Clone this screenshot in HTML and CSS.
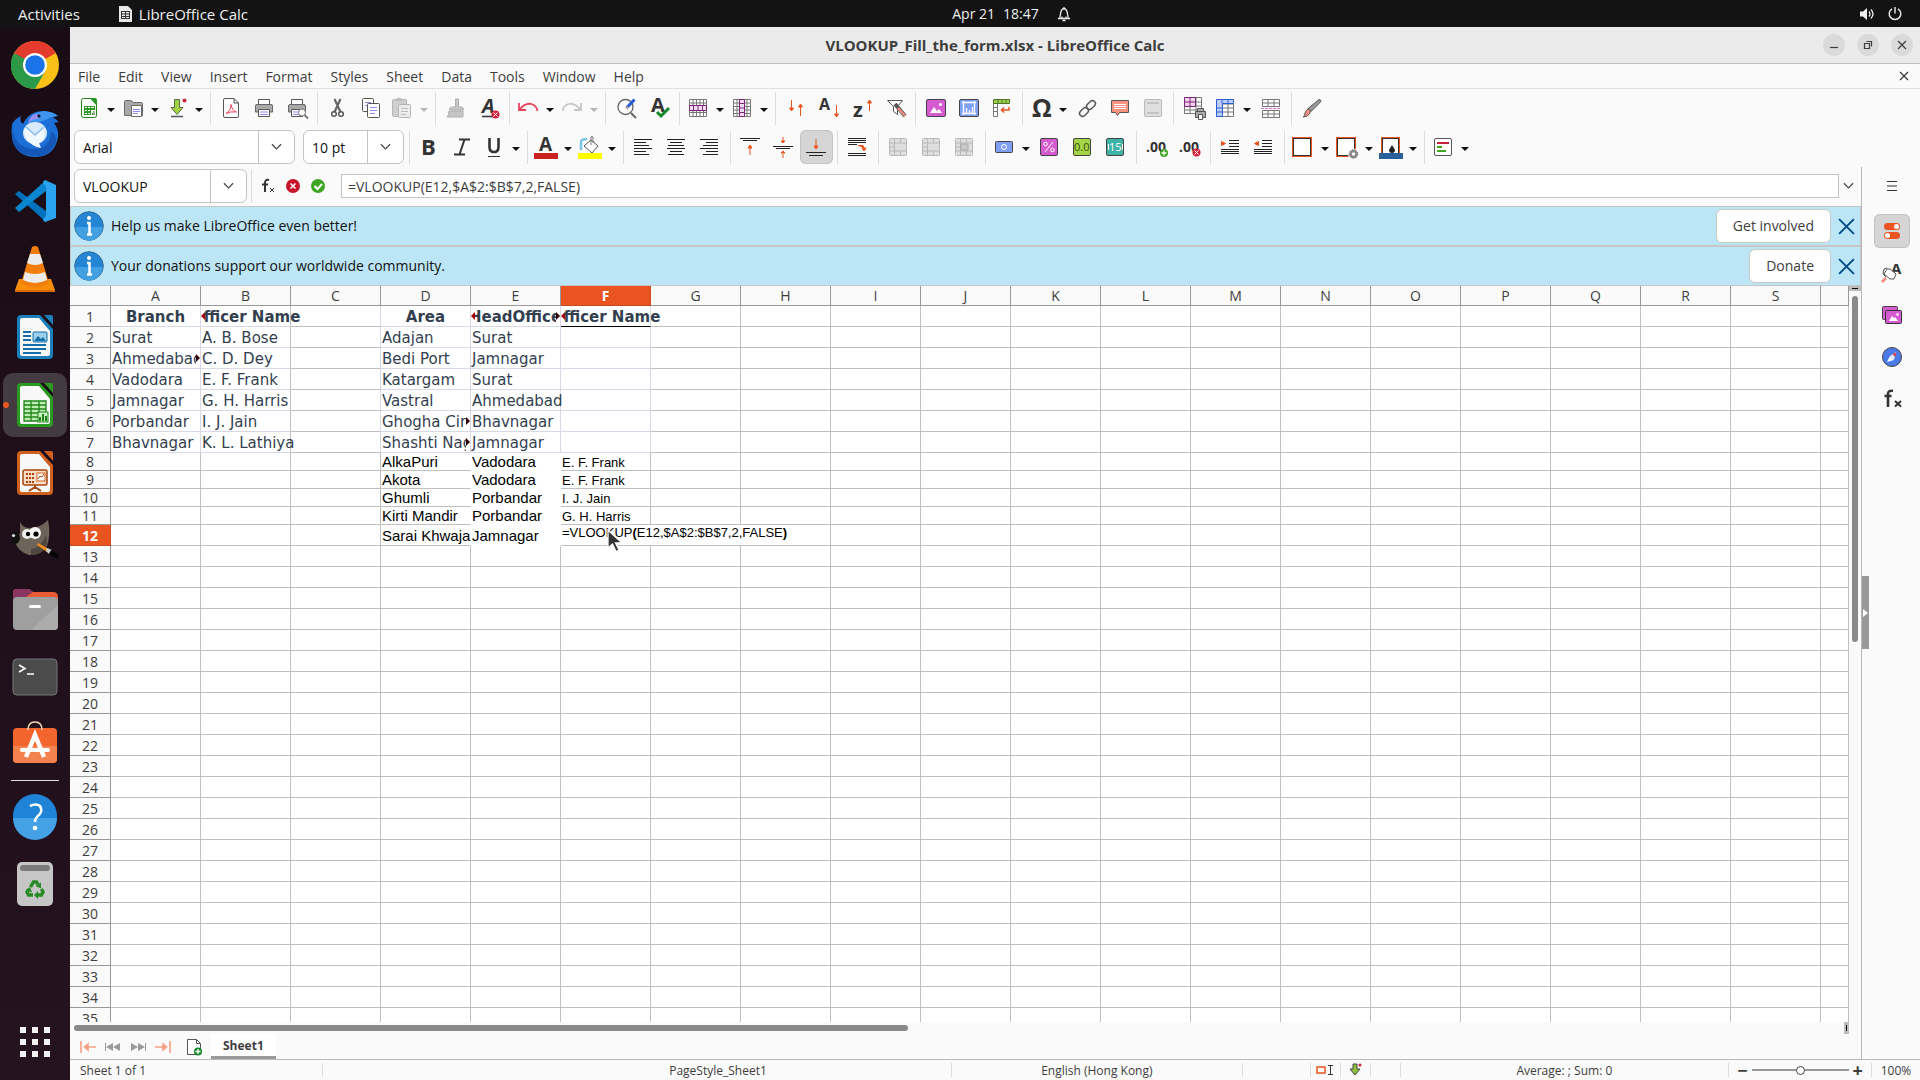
FILE: index.html
```html
<!DOCTYPE html>
<html lang="en">
<head>
    <meta charset="UTF-8">
    <title>VLOOKUP_Fill_the_form.xlsx - LibreOffice Calc</title>
    <link rel="stylesheet" href="styles.css">
</head>
<body>
<header class="topbar">
    <div class="top-left">
        <button>Activities</button>
        <button class="app-name">
            <svg width="14" height="16" viewBox="0 0 14 16"><path d="M1 0h9l4 4v12H1z" fill="#e8e8e8"/><path d="M3 5h9v8H3z" fill="#333"/><path d="M4 6h3v1.500H4zM8 6h3v1.500H8zM4 8.500h3V10H4zM8 8.500h3V10H8zM4 11h3v1H4zM8 11h3v1H8z" fill="#e8e8e8"/></svg>
            LibreOffice Calc
        </button>
    </div>
    <button class="clock">
        <span>Apr 21</span><span>18:47</span>
        <svg width="14" height="16" viewBox="0 0 14 16" fill="none" stroke="#eee" stroke-width="1.300"><path d="M1 12.500h12M2.500 12.500C4 10 2.500 3 7 2.500c4.500.500 3 7.500 4.500 10M5.500 14.500h3M7 1v1.500M5 12v-1.500M9 12v-1.500"/></svg>
    </button>
    <div class="top-right">
        <svg width="16" height="14" viewBox="0 0 16 14"><path d="M1 4.500h3L8 1v12L4 9.500H1z" fill="#eee"/><path d="M10 4.500q2 2.500 0 5M12 2.500q4 4.500 0 9" fill="none" stroke="#eee" stroke-width="1.300"/></svg>
        <svg width="14" height="14" viewBox="0 0 14 14" fill="none" stroke="#eee" stroke-width="1.400"><path d="M7 0v6.500M4 1.800a5.800 5.800 0 1 0 6 0"/></svg>
    </div>
</header>

<div class="desktop">
    <nav class="dock">
        <button aria-label="Google Chrome">
            <svg viewBox="0 0 48 48"><circle cx="24" cy="24" r="24" fill="#fbc116"/><path d="M24 24L3.200 12A24 24 0 0 1 44.800 12z" fill="#e33b2e"/><path d="M3.200 12A24 24 0 0 0 24 48L34.400 30 24 24 13.600 30z" fill="#2a9a49"/><path d="M3.200 12h41.600H24v12l-10.400 6z" fill="#e33b2e"/><path d="M3.200 12L13.600 30 24 24z" fill="#2a9a49"/><circle cx="24" cy="24" r="12" fill="#fff"/><circle cx="24" cy="24" r="9.800" fill="#1a73e8"/></svg>
        </button>
        <button aria-label="Thunderbird">
            <svg viewBox="0 0 48 48"><path d="M1 16q1-5 9-9-2 5 2 8Q18 2 33 2q10 1 14 5l-5 1 6 5-5 1q5 6 4 14-3 19-22 20Q4 48 1 28q-1-7 0-12z" fill="#1b6fd6"/><path d="M17 14Q20 3 33 2q10 1 14 5l-7 1q-8 5-14 5z" fill="#3f95ee"/><path d="M17 14q4-4 10-4 3-5-3-5-5 2-7 9z" fill="#9a8df0"/><circle cx="28" cy="7" r="1.600" fill="#113"/><path d="M2 16q-1 14 8 20 12 7 22 2 8-5 8-16 6 3 5 11-6 14-20 14Q5 47 1 30z" fill="#1457b8"/><ellipse cx="24" cy="24" rx="12" ry="11" fill="#d8eafb"/><path d="M15 18l9 8 9-8q2 12-5 16l2 5q-9-1-15-10-3-6 0-11z" fill="#f1f8ff"/><path d="M15 18l9 8 9-8" fill="none" stroke="#8abcf0" stroke-width="1.500"/></svg>
        </button>
        <button aria-label="Visual Studio Code">
            <svg viewBox="0 0 48 48"><path d="M4 17l4-3 27 20v11z" fill="#0071bd"/><path d="M4 31l4 4 27-21V3z" fill="#0a86d1"/><path d="M34 3l11 5v33l-11 4q-2-1-2-3l3-3V10l-3-4q0-2 2-3z" fill="#2ba3ee"/></svg>
        </button>
        <button aria-label="VLC">
            <svg viewBox="0 0 48 48"><path d="M8 34h32l4 11v2H4v-2z" fill="#f78d0a"/><path d="M4 45h40v2H4z" fill="#d96900"/><path d="M21 2q3-2 6 0l11 36q-14 8-28 0z" fill="#f27d0a"/><path d="M19 9h10l3 9q-8 4-16 0zM14 27q10 4 20 0l2 8q-12 6-24 0z" fill="#ececec"/></svg>
        </button>
        <button aria-label="LibreOffice Writer">
            <svg viewBox="0 0 48 48"><use href="#doc" color="#1b7fb9"/><path d="M12 19h8M12 23h8M12 27h8M12 32h23M12 36h23M12 40h18" stroke="#136fa8" stroke-width="2"/><rect x="22" y="19" width="14" height="10" rx="1" fill="#9dd0ea" stroke="#136fa8"/><path d="M23 28l4-5 3 3 2-2 3 4z" fill="#136fa8"/></svg>
        </button>
        <button class="running" aria-label="LibreOffice Calc">
            <svg viewBox="0 0 48 48"><use href="#doc" color="#2b9a22"/><path d="M13 20h22v20H13zM13 24h22M13 28h22M13 32h22M13 36h22M20 20v20M28 20v20" fill="#bdeeb2" stroke="#1f8418" stroke-width="1.300"/><rect x="27" y="31" width="10" height="10" fill="#c9f3c0" stroke="#1f8418"/><path d="M29 40v-4M32 40v-7M35 40v-5" stroke="#1f8418" stroke-width="2"/></svg>
        </button>
        <button aria-label="LibreOffice Impress">
            <svg viewBox="0 0 48 48"><use href="#doc" color="#d0601e"/><rect x="12" y="21" width="24" height="15" rx="2" fill="#fbdcc4" stroke="#a8450c" stroke-width="1.500"/><path d="M15 25h9M15 29h9M15 33h9" stroke="#a8450c" stroke-width="2" stroke-dasharray="2 1"/><rect x="26" y="24" width="8" height="8" fill="#fff" stroke="#d0601e"/><path d="M27 30l2-3 2 1 2-3" fill="none" stroke="#a8450c"/><path d="M24 36v2M24 38l-6 4M24 38l6 4" stroke="#a8450c" stroke-width="2"/></svg>
        </button>
        <button aria-label="GIMP">
            <svg viewBox="0 0 48 48"><path d="M9 5q3 6 10 6 10 0 18-8 3 14-1 26-6 10-18 9Q6 34 4 24q4-4 5-8z" fill="#6d6559"/><path d="M20 32q10-1 15-14 2 8-1 14-6 6-14 6z" fill="#4d473f"/><circle cx="16" cy="17" r="5" fill="#eee"/><circle cx="24" cy="16" r="6" fill="#f4f4f4"/><circle cx="17" cy="17" r="2.200"/><circle cx="25" cy="17" r="2.600"/><ellipse cx="4" cy="21" rx="5" ry="6" fill="#111"/><circle cx="2.500" cy="18.500" r="1.600" fill="#ddd"/><path d="M27 26l11 6-2 3-10-7z" fill="#ef8b1e"/><path d="M36 31l5 2-3 4-3-3z" fill="#ccc"/><path d="M40 33q8 3 8 9-6-2-10-5z" fill="#050505"/></svg>
        </button>
        <button aria-label="Files">
            <svg viewBox="0 0 48 48"><path d="M2 8q0-4 4-4h12l4 3h20q5 0 5 5v8H2z" fill="#e95b34"/><path d="M2 8q0-4 4-4h12l4 3-10 7-10 6z" fill="#8a3560"/><rect x="2" y="12" width="45" height="33" rx="4" fill="#9f9f9f"/><path d="M47 20v21q0 4-4 4H20z" fill="#acacac"/><rect x="18" y="20" width="12" height="3" rx="1.500" fill="#fff"/></svg>
        </button>
        <button aria-label="Terminal">
            <svg viewBox="0 0 48 48"><rect x="2" y="6" width="44" height="36" rx="4" fill="#4b4b4b" stroke="#777"/><path d="M8 12l6 3.500-6 3.500M16 21h7" fill="none" stroke="#fff" stroke-width="1.600"/></svg>
        </button>
        <button aria-label="Ubuntu Software">
            <svg viewBox="0 0 48 48"><rect x="2" y="7" width="44" height="35" rx="4" fill="#f2662d"/><path d="M2 25h44v13q0 4-4 4H6q-4 0-4-4z" fill="#f4824f"/><path d="M17 9q0-8 7-8t7 8" fill="none" stroke="#f3d6b4" stroke-width="1.500"/><path d="M15 36l9-22 9 22" fill="none" stroke="#fff" stroke-width="4.500"/><path d="M11 29h26" stroke="#fff" stroke-width="4" stroke-linecap="round"/></svg>
        </button>
        <hr>
        <button aria-label="Help">
            <svg viewBox="0 0 48 48"><circle cx="24" cy="24" r="22" fill="#1f83d8"/><path d="M2 26a22 22 0 0 0 44 0z" fill="#44a1e6"/><path d="M19 14q6-3 10 0 3 5-1 9-4 3-4 7" fill="none" stroke="#fff" stroke-width="2.600"/><circle cx="24" cy="36" r="2.300" fill="#fff"/></svg>
        </button>
        <button aria-label="Trash">
            <svg viewBox="0 0 48 48"><rect x="6" y="2" width="36" height="44" rx="5" fill="#c6c6c6"/><rect x="9" y="5" width="30" height="6" rx="3" fill="#7b7b7b"/><g fill="none" stroke="#268a24" stroke-width="3.400"><path d="M19.500 27l3-5h3l1.500 2.500"/><path d="M30.500 29l1.500 3-1.500 3H26"/><path d="M22 35h-4.500l-1.500-3 1.500-2.500"/></g><path d="M30 22.500v6l-5.500-2.500zM27 31v8l-4-4zM14.500 30l4.500-3 2 5.500z" fill="#268a24"/></svg>
        </button>
        <button class="apps" aria-label="Show Applications">
            <svg viewBox="0 0 48 48" fill="#f2f2f2"><path d="M9 9h6v6H9zM21 9h6v6h-6zM33 9h6v6h-6zM9 21h6v6H9zM21 21h6v6h-6zM33 21h6v6h-6zM9 33h6v6H9zM21 33h6v6h-6zM33 33h6v6h-6z"/></svg>
        </button>
    </nav>

    <main class="window">
        <div class="titlebar">
            <h1>VLOOKUP_Fill_the_form.xlsx - LibreOffice Calc</h1>
            <div class="win-buttons">
                <button aria-label="Minimize"><svg viewBox="0 0 22 22"><path d="M7 13.500h8"/></svg></button>
                <button aria-label="Restore"><svg viewBox="0 0 22 22"><path d="M7.500 9.500h5v5h-5zM9.500 7.500h5v5"/></svg></button>
                <button aria-label="Close"><svg viewBox="0 0 22 22"><path d="M7 7l8 8M15 7l-8 8"/></svg></button>
            </div>
        </div>
        <div class="menubar">
            <button>File</button><button>Edit</button><button>View</button><button>Insert</button><button>Format</button><button>Styles</button><button>Sheet</button><button>Data</button><button>Tools</button><button>Window</button><button>Help</button>
            <button class="close-doc" aria-label="Close document"><svg width="10" height="10" viewBox="0 0 10 10"><path d="M1 1l8 8M9 1L1 9" stroke="#3d3d3d" stroke-width="1.300"/></svg></button>
        </div>

        <!-- standard toolbar -->
        <div class="toolbar">
            <button class="tool" aria-label="New"><svg viewBox="0 0 24 24"><path d="M4.500 4.500q0-2 2-2h7l6 6v11q0 2-2 2h-11q-2 0-2-2z" fill="#fff" stroke="#1f8418"/><path d="M13 2h5q2 0 2 2v6z" fill="#2b9a22"/><path d="M7 10h11v9H7z" fill="#2b9a22"/><path d="M8 11h2v1H8zM11 11h2v1h-2zM14 11h3v1h-3zM8 14h2v1H8zM11 14h2v1h-2zM8 17h2v1H8zM11 17h2v1h-2zM14 14h4v5h-4z" fill="#fff"/><path d="M15.500 19v-2M17 19v-4" stroke="#1f8418"/></svg></button><button class="caret" aria-label="New options"></button>
            <button class="tool" aria-label="Open"><svg viewBox="0 0 24 24"><path d="M3.500 19.500v-14q0-1 1-1h6l2 2h8q1 0 1 1v12z" fill="#a9a9a9" stroke="#6a6a6a"/><path d="M10.500 9.500h10v11h-10z" fill="#fff" stroke="#6a6a6a"/><path d="M12 13.500h7M12 15.500h7M12 17.500h5" stroke="#8d8df0"/></svg></button><button class="caret" aria-label="Open options"></button>
            <button class="tool" aria-label="Save"><svg viewBox="0 0 24 24"><path d="M9.500 3.500h5v8h3.500l-6 7-6-7h3.500z" fill="#a2d243" stroke="#5b6b45"/><path d="M6 20.500h12" stroke="#555" stroke-width="1.500"/><circle cx="19.500" cy="4.500" r="2" fill="#c9203b"/></svg></button><button class="caret" aria-label="Save options"></button>
            <i class="sep"></i>
            <button class="tool" aria-label="Export as PDF"><svg viewBox="0 0 24 24"><path d="M4.500 4q0-1.500 1.500-1.500h9l4.500 4.500v13q0 1.500-1.500 1.500H6q-1.500 0-1.500-1.500zM15 2.500V7h4.500" fill="#fff" stroke="#555"/><path d="M7 17.500q5-3 5-9 1 6 5.500 7.500-6-1-10.500 1.500z" fill="none" stroke="#ee3f59"/></svg></button>
            <button class="tool" aria-label="Print"><svg viewBox="0 0 24 24"><use href="#printer"/></svg></button>
            <button class="tool" aria-label="Print Preview"><svg viewBox="0 0 24 24"><use href="#printer"/><circle cx="17" cy="16.500" r="3.500" fill="#fff" stroke="#777"/><path d="M19.500 19l3.500 3.500" stroke="#777" stroke-width="1.800"/></svg></button>
            <i class="sep"></i>
            <button class="tool" aria-label="Cut"><svg viewBox="0 0 24 24"><path d="M8.500 3l6 13M14.500 3l-6 13" stroke="#666" stroke-width="2.200"/><circle cx="8" cy="18" r="2.300" fill="#fff" stroke="#555" stroke-width="1.500"/><circle cx="15" cy="18" r="2.300" fill="#fff" stroke="#555" stroke-width="1.500"/></svg></button>
            <button class="tool" aria-label="Copy"><svg viewBox="0 0 24 24"><rect x="3.500" y="2.500" width="11" height="13" rx="1" fill="#fff" stroke="#555"/><path d="M6 6.500h6M6 9.500h2" stroke="#8d8df0"/><rect x="8.500" y="7.500" width="12" height="14" rx="1" fill="#fff" stroke="#555"/><path d="M11 11.500h7M11 14.500h7M11 17.500h5" stroke="#8d8df0"/></svg></button>
            <button class="tool" aria-label="Paste" disabled><svg viewBox="0 0 24 24"><rect x="2.500" y="3.500" width="14" height="17" rx="1.500" fill="#cfcfcf" stroke="#b5b5b5"/><path d="M6 3q3-3 6 0v2H6z" fill="#bbb"/><rect x="8.500" y="8.500" width="12" height="13" rx="1" fill="#ececec" stroke="#b5b5b5"/><path d="M11 12.500h7M11 15.500h7M11 18.500h5" stroke="#bbb"/></svg></button><button class="caret dim" aria-label="Paste options"></button>
            <i class="sep"></i>
            <button class="tool" aria-label="Clone Formatting"><svg viewBox="0 0 24 24"><path d="M11.500 3h3v8h3q2 0 2 3h-14q0-3 3-3h3zM5 15h14v6H3q2-2 2-6z" fill="#c5c5c5" stroke="#b0b0b0"/></svg></button>
            <button class="tool" aria-label="Clear Direct Formatting"><svg viewBox="0 0 24 24"><text x="5" y="17" class="glyph" font-size="20" font-style="italic">A</text><path d="M5 20.500h11" stroke="#333" stroke-width="1.500"/><use href="#badge-x" x="14" y="14"/></svg></button>
            <i class="sep"></i>
            <button class="tool" aria-label="Undo"><svg viewBox="0 0 24 24" fill="none" stroke="#e8425c" stroke-width="1.800"><path d="M3 7v7h7M3.500 13.500q6-7 12-5.500 5 1.500 6 7"/></svg></button><button class="caret" aria-label="Undo list"></button>
            <button class="tool" aria-label="Redo" disabled><svg viewBox="0 0 24 24" fill="none" stroke="#c6c6c6" stroke-width="1.800"><path d="M21 7v7h-7M20.500 13.500q-6-7-12-5.500-5 1.500-6 7"/></svg></button><button class="caret dim" aria-label="Redo list"></button>
            <i class="sep"></i>
            <button class="tool" aria-label="Find and Replace"><svg viewBox="0 0 24 24"><circle cx="11.500" cy="11" r="7.500" fill="#fff" stroke="#666" stroke-width="1.300"/><path d="M17 17l5 5" stroke="#666" stroke-width="2"/><path d="M20.500 3.500l-8 8.500" stroke="#2a5bd7" stroke-width="3"/><path d="M13.500 10l1.500 1.500-3 1z" fill="#f6a35b"/></svg></button>
            <button class="tool" aria-label="Spelling"><svg viewBox="0 0 24 24"><text x="4" y="16" class="glyph" font-size="20">A</text><path d="M10 16l4 4 8-8" fill="none" stroke="#14892c" stroke-width="3"/></svg></button>
            <i class="sep"></i>
            <button class="tool" aria-label="Row"><svg viewBox="0 0 24 24"><path d="M3.500 3.500h17v17h-17zM3.500 7h17M3.500 16.500h17M7 3.500v17M10.500 3.500v17M14 3.500v17M17.500 3.500v17" fill="#fff" stroke="#777"/><path d="M3.500 9.500h17v5h-17zM7.500 9.500v5M12 9.500v5M16.500 9.500v5" fill="#f6dcf2" stroke="#7c2475"/></svg></button><button class="caret" aria-label="Row options"></button>
            <button class="tool" aria-label="Column"><svg viewBox="0 0 24 24"><path d="M3.500 3.500h17v17h-17zM7 3.500v17M17 3.500v17M3.500 7h17M3.500 10.500h17M3.500 14h17M3.500 17.500h17" fill="#fff" stroke="#777"/><path d="M9.500 3.500h5v17h-5zM9.500 7.500h5M9.500 12h5M9.500 16.500h5" fill="#f6dcf2" stroke="#7c2475"/></svg></button><button class="caret" aria-label="Column options"></button>
            <i class="sep"></i>
            <button class="tool" aria-label="Sort"><svg viewBox="0 0 24 24" fill="#e95420" stroke="#e95420"><path d="M7.500 4v10M5.500 12h4l-2 3zM16.500 9v11M14.500 11h4l-2-3z"/></svg></button>
            <button class="tool" aria-label="Sort Ascending"><svg viewBox="0 0 24 24"><text x="2" y="14" class="glyph" font-size="16">A</text><path d="M19.500 9v11M17.500 18h4l-2 3z" fill="#e95420" stroke="#e95420"/></svg></button>
            <button class="tool" aria-label="Sort Descending"><svg viewBox="0 0 24 24"><text x="3" y="21" class="glyph" font-size="20">z</text><path d="M19.500 4v11M17.500 7h4l-2-3z" fill="#e95420" stroke="#e95420"/></svg></button>
            <button class="tool" aria-label="AutoFilter"><svg viewBox="0 0 24 24"><path d="M4.500 4.500h15l-5 6v8l-4-3v-5z" fill="#fff" stroke="#555"/><path d="M12 8l10 12" stroke="#555" stroke-width="4"/><path d="M15 12l7 8" stroke="#ef8d80" stroke-width="2.600"/></svg></button>
            <i class="sep"></i>
            <button class="tool" aria-label="Image"><svg viewBox="0 0 24 24"><rect x="2.500" y="3.500" width="19" height="17" rx="1.500" fill="#d65ad0" stroke="#444"/><path d="M6 17l4-6 3 4 2-2 3 4z" fill="#fff"/><circle cx="16.500" cy="8.500" r="1.500" fill="#fff"/></svg></button>
            <button class="tool" aria-label="Chart"><svg viewBox="0 0 24 24"><rect x="2.500" y="3.500" width="19" height="17" rx="1.500" fill="#7fa0f5" stroke="#444"/><path d="M6.500 5v14M5 17.500h14M5 6.500h14M17.500 5v14M9.500 17v-5M12.500 17v-3M15.500 17v-6" stroke="#fff" stroke-width="1.300"/></svg></button>
            <button class="tool" aria-label="Pivot Table"><svg viewBox="0 0 24 24"><path d="M3.500 7.500h4v13h-4zM3.500 11.500h4M3.500 15.500h4" fill="#fff" stroke="#777"/><path d="M3.500 3.500h16v4h-16zM8 3.500v4M12 3.500v4M16 3.500v4" fill="#9ad24a" stroke="#55702a"/><path d="M19 11v3h-7M14 11.500L11.500 14l2.500 2.500" fill="none" stroke="#e95420" stroke-width="1.500"/></svg></button>
            <i class="sep"></i>
            <button class="tool" aria-label="Special Character"><svg viewBox="0 0 24 24"><text x="3" y="21" class="glyph" font-size="25">Ω</text></svg></button><button class="caret" aria-label="Recent characters"></button>
            <button class="tool" aria-label="Hyperlink"><svg viewBox="0 0 24 24" fill="none" stroke="#555" stroke-width="1.400"><rect x="-5" y="-3" width="10" height="6" rx="3" transform="translate(9 16) rotate(-45)"/><rect x="-5" y="-3" width="10" height="6" rx="3" transform="translate(16 9) rotate(-45)"/></svg></button>
            <button class="tool" aria-label="Comment"><svg viewBox="0 0 24 24"><path d="M3.500 4.500h17v12h-9l-2 3-2-3h-4z" fill="#f8917f" stroke="#555"/><path d="M6 8.500h12M6 10.500h12M6 12.500h12" stroke="#fff"/></svg></button>
            <button class="tool" aria-label="Headers and Footers"><svg viewBox="0 0 24 24"><rect x="3.500" y="3.500" width="17" height="17" rx="1.500" fill="#dedede" stroke="#bbb"/><path d="M6 7h12M6 17h12" stroke="#bbb" stroke-width="1.500"/></svg></button>
            <i class="sep"></i>
            <button class="tool" aria-label="Print Area"><svg viewBox="0 0 24 24"><path d="M2.500 1.500h17v16h-17zM2.500 14h17M8 1.500v16M14 1.500v16M2.500 10h17M2.500 6h17" fill="#fff" stroke="#777"/><path d="M2.500 1.500h11v9h-11zM2.500 6h11M8 1.500v9" fill="#f2d3ee" stroke="#7c2475"/><path d="M13.500 15.500h10v6h-10zM15.500 12.500h6v3h-6z" fill="#aaa" stroke="#555"/><path d="M16.500 18.500h4v5h-4z" fill="#fff" stroke="#555"/></svg></button>
            <button class="tool" aria-label="Freeze Rows and Columns"><svg viewBox="0 0 24 24"><path d="M3.500 3.500h17v17h-17zM3.500 12h17M3.500 16h17M9 3.500v17M15 3.500v17M3.500 8h17" fill="#fff" stroke="#777"/><path d="M3.500 3.500h17v4h-11v13h-6zM9 3.500v4M15 3.500v4M3.500 12h6M3.500 16h6" fill="#bccdf9" stroke="#2e5fd6"/></svg></button><button class="caret" aria-label="Freeze options"></button>
            <button class="tool" aria-label="Split Window"><svg viewBox="0 0 24 24"><path d="M3.500 3.500h17v7h-17zM3.500 14.500h17v7h-17zM9 3.500v7M15 3.500v7M9 14.500v7M15 14.500v7M3.500 7h17M3.500 18h17" fill="#fff" stroke="#777"/><path d="M2 12.500h20" stroke="#e574dc" stroke-dasharray="3 1"/></svg></button>
            <i class="sep"></i>
            <button class="tool" aria-label="Draw Functions"><svg viewBox="0 0 24 24"><path d="M19 3.500q3 0 1 3l-9 9-3-3z" fill="#999" stroke="#555"/><path d="M8 13q4 1 2 4-2 4-7 4 2-1 2-4 1-3 3-4z" fill="#f8917f" stroke="#555"/></svg></button>
        </div>

        <!-- formatting toolbar -->
        <div class="toolbar">
            <div class="combo font-name"><input type="text" value="Arial" aria-label="Font Name"><button aria-label="Font list"><svg viewBox="0 0 12 8"><path d="M1 1l5 5 5-5"/></svg></button></div>
            <div class="combo font-size"><input type="text" value="10 pt" aria-label="Font Size"><button aria-label="Size list"><svg viewBox="0 0 12 8"><path d="M1 1l5 5 5-5"/></svg></button></div>
            <i class="sep"></i>
            <button class="tool" aria-label="Bold"><svg viewBox="0 0 24 24"><text x="3" y="20" class="glyph" font-size="22">B</text></svg></button>
            <button class="tool" aria-label="Italic"><svg viewBox="0 0 24 24"><path d="M8 4.500h11M3 19.500h11M13.500 4.500l-5 15" stroke="#333" stroke-width="2" fill="none"/></svg></button>
            <button class="tool" aria-label="Underline"><svg viewBox="0 0 24 24"><path d="M7.500 3v9q0 5 4.500 5t4.500-5V3" stroke="#333" stroke-width="2.600" fill="none"/><path d="M6 21.500h12" stroke="#333"/></svg></button><button class="caret" aria-label="Underline options"></button>
            <i class="sep"></i>
            <button class="tool" aria-label="Font Color"><svg viewBox="0 0 24 24"><text x="5" y="16" class="glyph" font-size="19">A</text><path d="M0 18h24v6H0z" fill="#c9211e"/></svg></button><button class="caret" aria-label="Font colors"></button>
            <button class="tool" aria-label="Background Color"><svg viewBox="0 0 24 24"><path d="M3 15V7q0-3 6-3" fill="none" stroke="#7cc5e6" stroke-width="2.500"/><path d="M6 11l7-6 7 6-6 7z" fill="#fff" stroke="#555"/><path d="M13 10V3q0-3 2-1v6" fill="none" stroke="#777"/><path d="M0 18h24v6H0z" fill="#ff0"/></svg></button><button class="caret" aria-label="Background colors"></button>
            <i class="sep"></i>
            <button class="tool" aria-label="Align Left"><svg viewBox="0 0 24 24" class="lines"><path d="M2 4.500h18M2 7.500h12M2 10.500h15M2 13.500h18M2 16.500h12M2 19.500h15"/></svg></button>
            <button class="tool" aria-label="Center Horizontally"><svg viewBox="0 0 24 24" class="lines"><path d="M2 4.500h18M5 7.500h12M3 10.500h16M2 13.500h18M5 16.500h12M3 19.500h16"/></svg></button>
            <button class="tool" aria-label="Align Right"><svg viewBox="0 0 24 24" class="lines"><path d="M2 4.500h18M8 7.500h12M5 10.500h15M2 13.500h18M8 16.500h12M5 19.500h15"/></svg></button>
            <i class="sep"></i>
            <button class="tool" aria-label="Align Top"><svg viewBox="0 0 24 24" class="lines"><path d="M1 3.500h20M4 5.500h14"/><path class="orange" d="M11 20V11M9 13h4l-2-3z"/></svg></button>
            <button class="tool" aria-label="Center Vertically"><svg viewBox="0 0 24 24" class="lines"><path d="M1 11.500h20M4 13.500h14"/><path class="orange" d="M11 2v4M9 6h4l-2 2zM11 23v-4M9 18h4l-2-2z"/></svg></button>
            <button class="tool pressed" aria-label="Align Bottom"><svg viewBox="0 0 24 24" class="lines"><path d="M1 17.500h20M4 20.500h14"/><path class="orange" d="M11 4v8M9 11h4l-2 3z"/></svg></button>
            <i class="sep"></i>
            <button class="tool" aria-label="Wrap Text"><svg viewBox="0 0 24 24" class="lines"><path d="M2 3.500h18M2 5.500h18M2 7.500h18M2 9.500h9M2 18.500h18M2 20.500h18"/><path class="orange" d="M12 10.500h5l1 3M16 13h4l-2 3z"/></svg></button>
            <i class="sep"></i>
            <button class="tool" aria-label="Merge and Center" disabled><svg viewBox="0 0 24 24"><use href="#merge"/></svg></button>
            <button class="tool" aria-label="Merge Cells" disabled><svg viewBox="0 0 24 24"><use href="#merge"/></svg></button>
            <button class="tool" aria-label="Unmerge Cells" disabled><svg viewBox="0 0 24 24"><use href="#merge"/><path d="M8 9h7v6H8z" fill="#c9c9c9" stroke="#aaa"/></svg></button>
            <i class="sep"></i>
            <button class="tool" aria-label="Format as Currency"><svg viewBox="0 0 24 24"><rect x="3.500" y="6.500" width="17" height="11" rx="1" fill="#7fa0f5" stroke="#444"/><circle cx="12" cy="12" r="2.500" fill="none" stroke="#fff"/></svg></button><button class="caret" aria-label="Currency options"></button>
            <button class="tool" aria-label="Format as Percent"><svg viewBox="0 0 24 24"><rect x="2.500" y="3.500" width="17" height="17" rx="1.500" fill="#d65ad0" stroke="#444"/><path d="M7 17l8-10" stroke="#fff"/><circle cx="7.500" cy="9" r="1.800" fill="none" stroke="#fff"/><circle cx="14.500" cy="15" r="1.800" fill="none" stroke="#fff"/></svg></button>
            <button class="tool" aria-label="Format as Number"><svg viewBox="0 0 24 24"><rect x="2.500" y="3.500" width="17" height="17" rx="1.500" fill="#a4d545" stroke="#444"/><text x="3" y="16" font-size="11" fill="#384a14">0.0</text></svg></button>
            <button class="tool" aria-label="Format as Date"><svg viewBox="0 0 24 24"><rect x="2.500" y="3.500" width="17" height="17" rx="1.500" fill="#3fb3a8" stroke="#444"/><text x="5" y="16" font-size="11" fill="#fff">15</text><path d="M4.500 9v6M18.500 9v6" stroke="#fff"/></svg></button>
            <i class="sep"></i>
            <button class="tool" aria-label="Add Decimal Place"><svg viewBox="0 0 24 24"><text x="1" y="17" class="glyph" font-size="14">.00</text><circle cx="19" cy="18" r="4" fill="#3fa624"/><path d="M16.500 18h5M19 15.500v5" stroke="#fff" stroke-width="1.300"/></svg></button>
            <button class="tool" aria-label="Delete Decimal Place"><svg viewBox="0 0 24 24"><text x="1" y="17" class="glyph" font-size="14">.00</text><use href="#badge-x" x="14" y="13"/></svg></button>
            <i class="sep"></i>
            <button class="tool" aria-label="Increase Indent"><svg viewBox="0 0 24 24" class="lines"><path d="M10 5.500h10M10 8.500h10M10 11.500h10M2 14.500h18M2 16.500h18M2 18.500h18"/><path class="orange" d="M2.500 6.500l4 2-4 2z"/></svg></button>
            <button class="tool" aria-label="Decrease Indent"><svg viewBox="0 0 24 24" class="lines"><path d="M10 5.500h10M10 8.500h10M10 11.500h10M2 14.500h18M2 16.500h18M2 18.500h18"/><path class="orange" d="M6.500 6.500l-4 2 4 2z"/></svg></button>
            <i class="sep"></i>
            <button class="tool" aria-label="Borders"><svg viewBox="0 0 24 24"><rect x="1.500" y="2.500" width="19" height="19" fill="#fff" stroke="#e95420"/><rect x="2.500" y="3.500" width="17" height="17" fill="#fff" stroke="#333"/></svg></button><button class="caret" aria-label="Border options"></button>
            <button class="tool" aria-label="Border Style"><svg viewBox="0 0 24 24"><rect x="1.500" y="2.500" width="19" height="19" fill="#fff" stroke="#e95420"/><rect x="2.500" y="3.500" width="17" height="17" fill="#fff" stroke="#333"/><circle cx="18.500" cy="19" r="5.500" fill="#fafafa"/><circle cx="18.500" cy="19" r="3" fill="none" stroke="#888" stroke-width="2.500"/><circle cx="18.500" cy="19" r="4.300" fill="none" stroke="#777" stroke-dasharray="1.500 1.500"/></svg></button><button class="caret" aria-label="Border styles"></button>
            <button class="tool" aria-label="Border Color"><svg viewBox="0 0 24 24"><rect x="2.500" y="2.500" width="18" height="18" fill="#fff" stroke="#e95420"/><rect x="3.500" y="3.500" width="16" height="16" fill="#fff" stroke="#333"/><path d="M13 10l3 5q0 3-3 3t-3-3z" fill="#222"/><path d="M0 18h24v6H0z" fill="#2a6099"/></svg></button><button class="caret" aria-label="Border colors"></button>
            <i class="sep"></i>
            <button class="tool" aria-label="Conditional Formatting"><svg viewBox="0 0 24 24"><rect x="3.500" y="3.500" width="17" height="17" rx="1.500" fill="#fff" stroke="#555"/><path d="M6 8h12" stroke="#c9203b" stroke-width="2"/><path d="M6 12h5M6 16h9" stroke="#3fa624" stroke-width="2"/></svg></button><button class="caret" aria-label="Conditional options"></button>
        </div>

        <div class="workspace">
            <div class="document">
                <div class="toolbar formula-bar">
                    <div class="combo name-box"><input type="text" value="VLOOKUP" aria-label="Name Box"><button aria-label="Name list"><svg viewBox="0 0 12 8"><path d="M1 1l5 5 5-5"/></svg></button></div>
                    <i class="sep"></i>
                    <div class="formula-tools">
                        <button aria-label="Function Wizard"><svg viewBox="0 0 16 16"><path d="M9 2q-4-1-4 3v9M2 6.500h6" fill="none" stroke="#333" stroke-width="2"/><path d="M10 10l4 4M14 10l-4 4" stroke="#333"/></svg></button>
                        <button aria-label="Cancel"><svg viewBox="0 0 16 16"><circle cx="8" cy="8" r="7" fill="#c7162b"/><path d="M5.500 5.500l5 5M10.500 5.500l-5 5" stroke="#fff" stroke-width="1.500"/></svg></button>
                        <button aria-label="Accept"><svg viewBox="0 0 16 16"><circle cx="8" cy="8" r="7" fill="#3fa624"/><path d="M4.500 8l3 3 4.500-5" stroke="#fff" stroke-width="2" fill="none"/></svg></button>
                    </div>
                    <input class="formula" type="text" value="=VLOOKUP(E12,$A$2:$B$7,2,FALSE)" aria-label="Input line">
                    <button class="expand" aria-label="Expand Formula Bar"><svg viewBox="0 0 12 8"><path d="M1 1l5 5 5-5"/></svg></button>
                </div>
                <div class="infobar">
                    <svg viewBox="0 0 30 30"><use href="#info"/></svg>
                    <p>Help us make LibreOffice even better!</p>
                    <button class="action">Get involved</button>
                    <button class="dismiss" aria-label="Close Infobar"><svg viewBox="0 0 16 16"><path d="M1 1l14 14M15 1L1 15"/></svg></button>
                </div>
                <div class="infobar">
                    <svg viewBox="0 0 30 30"><use href="#info"/></svg>
                    <p>Your donations support our worldwide community.</p>
                    <button class="action">Donate</button>
                    <button class="dismiss" aria-label="Close Infobar"><svg viewBox="0 0 16 16"><path d="M1 1l14 14M15 1L1 15"/></svg></button>
                </div>
                <div class="sheet-row">
                    <div class="sheet-view">
                        <table class="sheet" id="sheet"></table>
                    </div>
                    <div class="vscroll"><span class="split"></span><span class="thumb"></span></div>
                </div>
                <div class="hscroll"><span class="thumb"></span><span class="split"></span></div>
                <div class="tabs">
                    <button aria-label="First Sheet"><svg viewBox="0 0 16 12" class="nav-end"><path d="M1 0v12M4 6h12M8 3L4.500 6 8 9z"/></svg></button>
                    <button aria-label="Previous Sheet"><svg viewBox="0 0 16 12" class="nav-step"><path d="M0 2h1v8H0zM8 2v8L1 6zM15 2v8L8 6z"/></svg></button>
                    <button aria-label="Next Sheet"><svg viewBox="0 0 16 12" class="nav-step"><path d="M15 2h1v8h-1zM1 2v8l7-4zM8 2v8l7-4z"/></svg></button>
                    <button aria-label="Last Sheet"><svg viewBox="0 0 16 12" class="nav-end"><path d="M15 0v12M12 6H0M8 3l3.500 3L8 9z"/></svg></button>
                    <button class="add" aria-label="Add Sheet"><svg viewBox="0 0 16 18"><path d="M1.500 1.500h9l4 4v11h-13zM10.500 1.500v4h4" fill="#fff" stroke="#555"/><circle cx="12" cy="13.500" r="4" fill="#14892c"/><path d="M9.500 13.500h5M12 11v5" stroke="#fff" stroke-width="1.300"/></svg></button>
                    <button class="tab">Sheet1</button>
                </div>
            </div>
            <aside class="sidebar">
                <button aria-label="Sidebar Settings"><svg viewBox="0 0 24 24"><path d="M7 7.500h10M7 12h10M7 16.500h10" stroke="#333"/></svg></button>
                <button class="pressed" aria-label="Properties"><svg viewBox="0 0 24 24"><rect x="4" y="4" width="16" height="7" rx="3.500" fill="#e95420"/><rect x="4" y="13" width="16" height="7" rx="3.500" fill="#e95420"/><circle cx="16.500" cy="7.500" r="2.500" fill="#fff"/><circle cx="7.500" cy="16.500" r="2.500" fill="#fff"/></svg></button>
                <button aria-label="Styles"><svg viewBox="0 0 24 24"><text x="11" y="13" class="glyph" font-size="15">A</text><path d="M2 21l4-4" stroke="#f8917f" stroke-width="3"/><path d="M4 13l3-5 3 0 6 5-2 5-4 0z" fill="#fff" stroke="#555"/><path d="M6 16l-3-3 1-5 3-1" fill="none" stroke="#555"/></svg></button>
                <button aria-label="Gallery"><svg viewBox="0 0 24 24"><rect x="2.500" y="3.500" width="15" height="13" rx="1" fill="#d65ad0" stroke="#444"/><rect x="5.500" y="7.500" width="16" height="13" rx="1" fill="#d65ad0" stroke="#333"/><path d="M9 18l3-5 2 2 1-1 3 4z" fill="#fff"/><circle cx="17.500" cy="11.500" r="1.200" fill="#fff"/></svg></button>
                <button aria-label="Navigator"><svg viewBox="0 0 24 24"><circle cx="12" cy="12" r="9.500" fill="#4a7be8" stroke="#444"/><path d="M7 17l3-6 4 4z" fill="#fff"/><path d="M10 11l6-4-2 8z" fill="#dfe8ff"/><path d="M16.500 7.500L12.500 9l2.500 3z" fill="#e03a3a"/></svg></button>
                <button aria-label="Functions"><svg viewBox="0 0 24 24"><path d="M13 4q-5-1-5 3v13M4.500 9h7" fill="none" stroke="#333" stroke-width="2.600"/><path d="M15 14l6 5.500M21 14l-6 5.500" stroke="#333" stroke-width="2"/></svg></button>
                <span class="grip"></span>
            </aside>
        </div>

        <footer class="statusbar">
            <span class="sheet-count">Sheet 1 of 1</span>
            <span class="page-style">PageStyle_Sheet1</span>
            <span class="language">English (Hong Kong)</span>
            <span class="insert-mode"></span>
            <span class="mark"><svg width="18" height="12" viewBox="0 0 18 12"><path d="M1 3h8v6H1z" fill="none" stroke="#e95420" stroke-width="1.500"/><path d="M12 1.500h5M12 10.500h5M14.500 1v9" stroke="#333"/></svg></span>
            <span class="mark"><svg width="14" height="14" viewBox="0 0 14 14"><path d="M5 1h4v5h3l-5 6-5-6h3z" fill="#8fc03c" stroke="#444"/><circle cx="12" cy="2" r="1.500" fill="#c9203b"/></svg></span>
            <span class="mark"></span>
            <span class="summary">Average: ; Sum: 0</span>
            <span class="zoom">
                <button aria-label="Zoom out">−</button>
                <input type="range" min="20" max="600" value="310" aria-label="Zoom">
                <button aria-label="Zoom in">+</button>
            </span>
            <span class="percent">100%</span>
        </footer>
    </main>
</div>

<svg class="defs" width="0" height="0">
    <symbol id="doc" viewBox="0 0 48 48"><path d="M10 2h20l12 13v27q0 4-4 4H10q-4 0-4-4V6q0-4 4-4z" fill="currentColor"/><path d="M11 5h17l11 13v23q0 2-2 2H11q-2 0-2-2V7q0-2 2-2z" fill="#f8f8f8"/><path d="M29 2l13 14v-5L33 2z" fill="#1a0d18"/><path d="M33 2h7q2 0 2 2v8z" fill="currentColor"/></symbol>
    <symbol id="printer" viewBox="0 0 24 24"><path d="M6.500 3.500h11v6h-11z" fill="#fff" stroke="#555"/><path d="M3.500 10q0-1.500 1.500-1.500h14q1.500 0 1.500 1.500v6h-17z" fill="#a9a9a9" stroke="#666"/><path d="M6.500 13.500h11v7h-11z" fill="#fff" stroke="#555"/><path d="M8 16h8M8 18.500h8" stroke="#8d8df0"/></symbol>
    <symbol id="badge-x" viewBox="0 0 9 9" width="9" height="9"><circle cx="4.500" cy="4.500" r="4" fill="#d2213d"/><path d="M2.500 2.500l4 4M6.500 2.500l-4 4" stroke="#fff"/></symbol>
    <symbol id="merge" viewBox="0 0 24 24"><rect x="2.500" y="3.500" width="17" height="17" rx="1" fill="#dedede" stroke="#b8b8b8"/><path d="M2.500 8h17M2.500 12h5M2.500 16h17M7.500 3.500v17M13.500 3.500v4M13.500 16v4.500" fill="none" stroke="#b8b8b8"/></symbol>
    <symbol id="info" viewBox="0 0 30 30"><circle cx="15" cy="15" r="14.300" fill="#2385d3" stroke="#366a94"/><path d="M1.500 16a13.500 13.500 0 0 0 27 0z" fill="#42a0e2"/><circle cx="15" cy="7" r="2" fill="#fff"/><path d="M13 12h2.500v11M13 23.500h5" stroke="#fff" stroke-width="2.500" fill="none"/></symbol>
</svg>

<script>
    var cols = 'ABCDEFGHIJKLMNOPQRS'.split('');

    // text, classes of the cell
    var cells = {
        A1: ['Branch', 'head'], B1: ['Officer Name', 'head cut-left'], D1: ['Area', 'head'],
        E1: ['HeadOffice', 'head cut-left cut-right'], F1: ['Officer Name', 'head cut-left black-line'],
        A2: ['Surat'], B2: ['A. B. Bose'], D2: ['Adajan'], E2: ['Surat'],
        A3: ['Ahmedabad', 'cut-right'], B3: ['C. D. Dey'], D3: ['Bedi Port'], E3: ['Jamnagar'],
        A4: ['Vadodara'], B4: ['E. F. Frank'], D4: ['Katargam'], E4: ['Surat'],
        A5: ['Jamnagar'], B5: ['G. H. Harris'], D5: ['Vastral'], E5: ['Ahmedabad'],
        A6: ['Porbandar'], B6: ['I. J. Jain'], D6: ['Ghogha Circle', 'cut-right'], E6: ['Bhavnagar'],
        A7: ['Bhavnagar'], B7: ['K. L. Lathiya'], D7: ['Shashti Nagar', 'cut-right'], E7: ['Jamnagar'],
        D8: ['AlkaPuri'], E8: ['Vadodara'], F8: ['E. F. Frank'],
        D9: ['Akota'], E9: ['Vadodara'], F9: ['E. F. Frank'],
        D10: ['Ghumli'], E10: ['Porbandar'], F10: ['I. J. Jain'],
        D11: ['Kirti Mandir'], E11: ['Porbandar'], F11: ['G. H. Harris'],
        D12: ['Sarai Khwaja'], E12: ['Jamnagar']
    };
    var pointer = '<svg class="pointer" viewBox="0 0 16 24"><path d="M1 1v18l4.500-4 3.500 7.500 3-1.500-3.500-7H15z" fill="#333" stroke="#fff" stroke-width="1.300"/></svg>';

    function cellClass(col, row, extra) {
        var cls = extra || '';
        if (row <= 7) {
            cls += ' styled';
            if ('ABDEF'.indexOf(col) >= 0) cls += ' soft-bottom';
            if ('ACDEF'.indexOf(col) >= 0) cls += ' soft-right';
        } else if (row <= 12) {
            if (col == 'D' || col == 'E') cls += ' no-right';
            if (col == 'E') cls += ' no-bottom';
            if (col == 'F') cls += ' small';
        }
        return cls;
    }

    var html = '<colgroup><col class="num">' + cols.map(function () { return '<col class="col">'; }).join('') + '<col></colgroup>';
    html += '<thead><tr><th></th>' + cols.map(function (c) {
        return '<th' + (c == 'F' ? ' class="current"' : '') + '>' + c + '</th>';
    }).join('') + '<th></th></tr></thead><tbody>';

    for (var r = 1; r <= 35; r++) {
        html += '<tr' + (r >= 8 && r <= 11 ? ' class="short"' : '') + '><th' + (r == 12 ? ' class="current"' : '') + '>' + r + '</th>';
        for (var i = 0; i < cols.length; i++) {
            if (cols[i] == 'F' && r == 12) {
                // cell being edited, its text runs over G and H
                html += '<td colspan="3" class="editing">=VLOOKUP<b>(</b>E12,$A$2:$B$7,2,FALSE<b>)</b>' + pointer + '</td>';
                i += 2;
                continue;
            }
            var c = cells[cols[i] + r];
            html += '<td class="' + cellClass(cols[i], r, c && c[1]) + '">' + (c ? '<div><span>' + c[0] + '</span></div>' : '') + '</td>';
        }
        html += '<td></td></tr>';
    }
    document.getElementById('sheet').innerHTML = html + '</tbody>';
</script>
</body>
</html>
```
FILE: styles.css
```css
*{
    margin: 0;
    padding: 0;
    box-sizing: border-box;
}
body{
    height: 100vh;
    display: flex;
    flex-direction: column;
    overflow: hidden;
    font-family: "Open Sans", sans-serif;
    font-size: 14px;
    color: #3d3d3d;
}
button, input{
    font: inherit;
    color: inherit;
    border: none;
    background: none;
}
svg{
    display: block;
    flex-shrink: 0;
}
.defs{
    position: absolute;
}

/* top panel */
.topbar{
    height: 27px;
    flex-shrink: 0;
    display: grid;
    grid-template-columns: 1fr auto 1fr;
    align-items: center;
    background: #131313;
    color: #eee;
}
.top-left, .top-right, .clock, .app-name{
    display: flex;
    align-items: center;
}
.top-left{
    padding-left: 18px;
    gap: 38px;
    font-size: 15px;
}
.app-name{
    gap: 7px;
}
.clock{
    padding-left: 103px;
    gap: 8px;
}
.clock svg{
    margin-left: 10px;
}
.top-right{
    justify-content: flex-end;
    gap: 13px;
    padding-right: 18px;
}

.desktop{
    flex: 1;
    min-height: 0;
    display: flex;
}

/* dock */
.dock{
    width: 70px;
    flex-shrink: 0;
    padding: 6px 3px;
    display: flex;
    flex-direction: column;
    gap: 4px;
    background: linear-gradient(#190c15, #25131f);
}
.dock button{
    width: 64px;
    height: 64px;
    border-radius: 10px;
    display: flex;
    align-items: center;
    justify-content: center;
    position: relative;
}
.dock svg{
    width: 48px;
    height: 48px;
}
.dock hr{
    width: 48px;
    height: 1px;
    border: none;
    background: #ddd;
    margin: -1px 8px;
    flex-shrink: 0;
}
.dock .running{
    background: #443a42;
}
.dock .running::before{
    content: "";
    position: absolute;
    left: 0;
    top: 29px;
    width: 6px;
    height: 6px;
    border-radius: 50%;
    background: #e95420;
}
.dock .apps{
    margin-top: auto;
}

/* window */
.window{
    flex: 1;
    min-width: 0;
    display: flex;
    flex-direction: column;
    background: #fafafa;
}
.titlebar{
    height: 37px;
    flex-shrink: 0;
    display: grid;
    grid-template-columns: 1fr auto 1fr;
    align-items: center;
    background: #ebebeb;
    border-bottom: 1px solid #bdbdbd;
}
.titlebar h1{
    grid-column: 2;
    font-size: 15px;
    font-weight: 700;
}
.win-buttons{
    display: flex;
    justify-content: flex-end;
    gap: 12px;
    padding-right: 7px;
}
.win-buttons button{
    width: 22px;
    height: 22px;
    border-radius: 50%;
    background: #dadada;
}
.win-buttons path{
    fill: none;
    stroke: #3d3d3d;
    stroke-width: 1.2;
}
.menubar{
    height: 25px;
    flex-shrink: 0;
    display: flex;
    align-items: center;
    gap: 18px;
    padding: 0 11px 0 8px;
    border-bottom: 1px solid #dedede;
}
.close-doc{
    margin-left: auto;
}

.toolbar{
    height: 39px;
    flex-shrink: 0;
    display: flex;
    align-items: center;
    padding: 0 0 1px 4px;
}
.tool{
    width: 33px;
    height: 34px;
    padding-left: 5px;
    border-radius: 6px;
    flex-shrink: 0;
}
.tool:has(+ .caret){
    padding-left: 3px;
}
.tool svg{
    width: 24px;
    height: 24px;
    overflow: visible;
}
.pressed{
    background: #d5d5d5;
    box-shadow: inset 0 0 0 1px #c4c4c4;
}
.caret{
    width: 11px;
    height: 34px;
    flex-shrink: 0;
}
.caret::after{
    content: "";
    display: block;
    margin: 3px 0 0;
    width: 0;
    border: 4px solid transparent;
    border-top-color: #111;
    border-bottom: none;
}
.caret.dim::after{
    border-top-color: #b5b5b5;
}
.sep{
    width: 8px;
    height: 33px;
    flex-shrink: 0;
    background: linear-gradient(#dcdcdc, #dcdcdc) center / 1px 100% no-repeat;
}
.glyph{
    font-weight: 700;
    fill: #333;
}
.lines path{
    fill: none;
    stroke: #222;
}
.lines .orange{
    fill: #e95420;
    stroke: #e95420;
}

.combo{
    height: 34px;
    display: flex;
    flex-shrink: 0;
    background: #fff;
    border: 1px solid #c4c4c4;
    border-radius: 6px;
    color: #111;
}
.combo input{
    flex: 1;
    min-width: 0;
    padding-left: 8px;
}
.combo button{
    width: 36px;
    padding-left: 12px;
    border-left: 1px solid #c4c4c4;
}
.combo svg, .expand svg{
    width: 11px;
    height: 8px;
    fill: none;
    stroke: #444;
    stroke-width: 1.3;
}
.font-name{
    width: 221px;
    margin-right: 8px;
}
.font-size{
    width: 101px;
    margin-right: 1px;
}
.name-box{
    width: 173px;
}

.workspace{
    flex: 1;
    min-height: 0;
    display: flex;
}
.document{
    flex: 1;
    min-width: 0;
    display: flex;
    flex-direction: column;
}
.formula-tools{
    display: flex;
    gap: 9px;
    padding: 0 15px 0 5px;
}
.formula-tools svg{
    width: 16px;
    height: 16px;
}
.formula{
    flex: 1;
    min-width: 0;
    height: 24px;
    padding-left: 6px;
    background: #fff;
    border: 1px solid #c4c4c4;
}
.expand{
    width: 22px;
    padding-left: 4px;
}

.infobar{
    height: 40px;
    flex-shrink: 0;
    display: flex;
    align-items: center;
    padding: 0 5px 0 3px;
    background: #bce5f6;
    border: 1px solid #c6c6c6;
    color: #111;
}
.infobar > svg{
    width: 30px;
    height: 30px;
}
.infobar p{
    flex: 1;
    padding: 0 0 2px 7px;
}
.action{
    height: 34px;
    padding: 0 16px 2px;
    background: #fff;
    border: 1px solid #cdc7c2;
    border-radius: 6px;
    color: #3d3d3d;
}
.dismiss{
    margin-left: 7px;
}
.dismiss svg{
    width: 17px;
    height: 17px;
    stroke: #004b86;
    stroke-width: 1.8;
}

/* sheet */
.sheet-row{
    flex: 1;
    min-height: 0;
    display: flex;
}
.sheet-view{
    flex: 1;
    min-width: 0;
    overflow: hidden;
}
.sheet{
    width: 100%;
    table-layout: fixed;
    border-collapse: separate;
    border-spacing: 0;
    background: #fff;
    color: #000;
    font-family: "Liberation Sans", sans-serif;
    font-size: 15px;
    line-height: 17px;
}
.num{
    width: 41px;
}
.col{
    width: 90px;
}
.sheet th{
    font-family: "Open Sans", sans-serif;
    font-size: 14px;
    font-weight: 400;
    color: #3d3d3d;
    background: #fafafa;
    border-right: 1px solid #999;
    border-bottom: 1px solid #999;
}
.sheet th.current{
    background: #e95420;
    border-color: #c94a1e;
    color: #fff;
    font-weight: 700;
}
.sheet tr{
    height: 21px;
}
.sheet thead tr{
    height: 20px;
}
.sheet .short{
    height: 18px;
}
.sheet td{
    border-right: 1px solid #c0c0c0;
    border-bottom: 1px solid #c0c0c0;
    padding-left: 1px;
    white-space: nowrap;
    position: relative;
}
.sheet .styled{
    padding-top: 2px;
    font-family: "DejaVu Sans", sans-serif;
    color: #333f4f;
}
.sheet .head{
    font-weight: 700;
    padding-left: 0;
}
.head div{
    display: flex;
    justify-content: center;
}
.sheet .soft-bottom{
    border-bottom-color: #d8d8e6;
}
.sheet .soft-right{
    border-right-color: #d8d8e6;
}
.sheet .black-line{
    border-bottom-color: #000;
}
.sheet .no-right{
    border-right-color: #fff;
}
.sheet .no-bottom{
    border-bottom-color: #fff;
}
.sheet .small{
    padding-top: 2px;
    font-size: 13px;
    line-height: 15px;
}
.cut-left div{
    clip-path: inset(0 -40px 0 3px);
}
.cut-right div{
    margin-right: 4px;
    overflow: hidden;
}
.cut-left.cut-right div{
    margin-left: 3px;
    clip-path: none;
}
/* little arrows that tell that the text is longer than the cell */
.cut-left::before, .cut-right::after{
    content: "";
    position: absolute;
    top: 6px;
    border: 4px solid transparent;
}
.cut-left::before{
    left: 0;
    border-left: none;
    border-right-color: #a00;
}
.cut-right::after{
    right: 0;
    border-right: none;
    border-left-color: #300;
}
.sheet .editing{
    padding-top: 1px;
    font-size: 13px;
    line-height: 14px;
    vertical-align: top;
}
.pointer{
    position: absolute;
    left: 46px;
    top: 4px;
    width: 16px;
    height: 24px;
    z-index: 1;
}

.vscroll{
    width: 12px;
    flex-shrink: 0;
    display: flex;
    flex-direction: column;
    align-items: center;
}
.vscroll .split{
    width: 12px;
    height: 5px;
    background: linear-gradient(#000, #000) center / 6px 1px no-repeat #bbb;
}
.vscroll .thumb{
    width: 6px;
    height: 47%;
    margin-top: 5px;
    border-radius: 3px;
    background: #8a8a8a;
}
.hscroll{
    height: 12px;
    flex-shrink: 0;
    display: flex;
    align-items: center;
    justify-content: space-between;
    padding: 0 12px 0 4px;
}
.hscroll .thumb{
    width: 47%;
    height: 6px;
    border-radius: 3px;
    background: #8a8a8a;
}
.hscroll .split{
    width: 5px;
    height: 12px;
    background: linear-gradient(#000, #000) center / 1px 6px no-repeat #bbb;
}

.tabs{
    height: 25px;
    flex-shrink: 0;
    display: flex;
    align-items: center;
    gap: 9px;
    padding-left: 10px;
}
.tabs svg{
    width: 16px;
    height: 12px;
}
.nav-end{
    fill: #f5a184;
    stroke: #f5a184;
    stroke-width: 1.6;
}
.nav-step{
    fill: #9a9a9a;
}
.tabs .add{
    margin-left: 6px;
}
.tabs .add svg{
    height: 18px;
}
.tab{
    height: 25px;
    padding: 0 12px;
    background: #fff;
    border-bottom: 3px solid #999;
    font-size: 12px;
    font-weight: 700;
}

/* sidebar */
.sidebar{
    width: 59px;
    flex-shrink: 0;
    border-left: 1px solid #b9b9b9;
    display: flex;
    flex-direction: column;
    align-items: center;
    gap: 8px;
    padding: 2px 0 0 2px;
    position: relative;
}
.sidebar button{
    width: 36px;
    height: 34px;
    border-radius: 6px;
    display: flex;
    align-items: center;
    justify-content: center;
}
.sidebar button:first-child{
    margin-bottom: 3px;
}
.sidebar svg{
    width: 24px;
    height: 24px;
}
.grip{
    position: absolute;
    left: 0;
    top: 409px;
    width: 7px;
    height: 73px;
    background: #999;
}
.grip::after{
    content: "";
    position: absolute;
    left: 1px;
    top: 33px;
    border: 4px solid transparent;
    border-left: 5px solid #fff;
    border-right: none;
}

/* status bar */
.statusbar{
    height: 21px;
    flex-shrink: 0;
    display: flex;
    align-items: center;
    border-top: 1px solid #b9b9b9;
    font-size: 12px;
}
.statusbar > span{
    height: 14px;
    display: flex;
    align-items: center;
    justify-content: center;
    border-right: 1px solid #dcdcdc;
}
.statusbar > .sheet-count{
    width: 253px;
    justify-content: flex-start;
    padding-left: 10px;
}
.page-style{
    width: 629px;
    padding-left: 162px;
}
.language{
    flex: 292;
}
.insert-mode{
    width: 68px;
}
.mark{
    width: 30px;
}
.summary{
    flex: 330;
}
.zoom{
    width: 143px;
    gap: 4px;
}
.zoom button{
    font-size: 18px;
    font-weight: 700;
    line-height: 14px;
}
.zoom input{
    width: 97px;
    height: 12px;
    appearance: none;
    background: linear-gradient(#999, #999) center / 100% 2px no-repeat;
}
.zoom input::-webkit-slider-thumb{
    appearance: none;
    width: 9px;
    height: 9px;
    border: 1px solid #444;
    border-radius: 50%;
    background: #fff;
}
.statusbar > .percent{
    width: 48px;
    border-right: none;
}
```
